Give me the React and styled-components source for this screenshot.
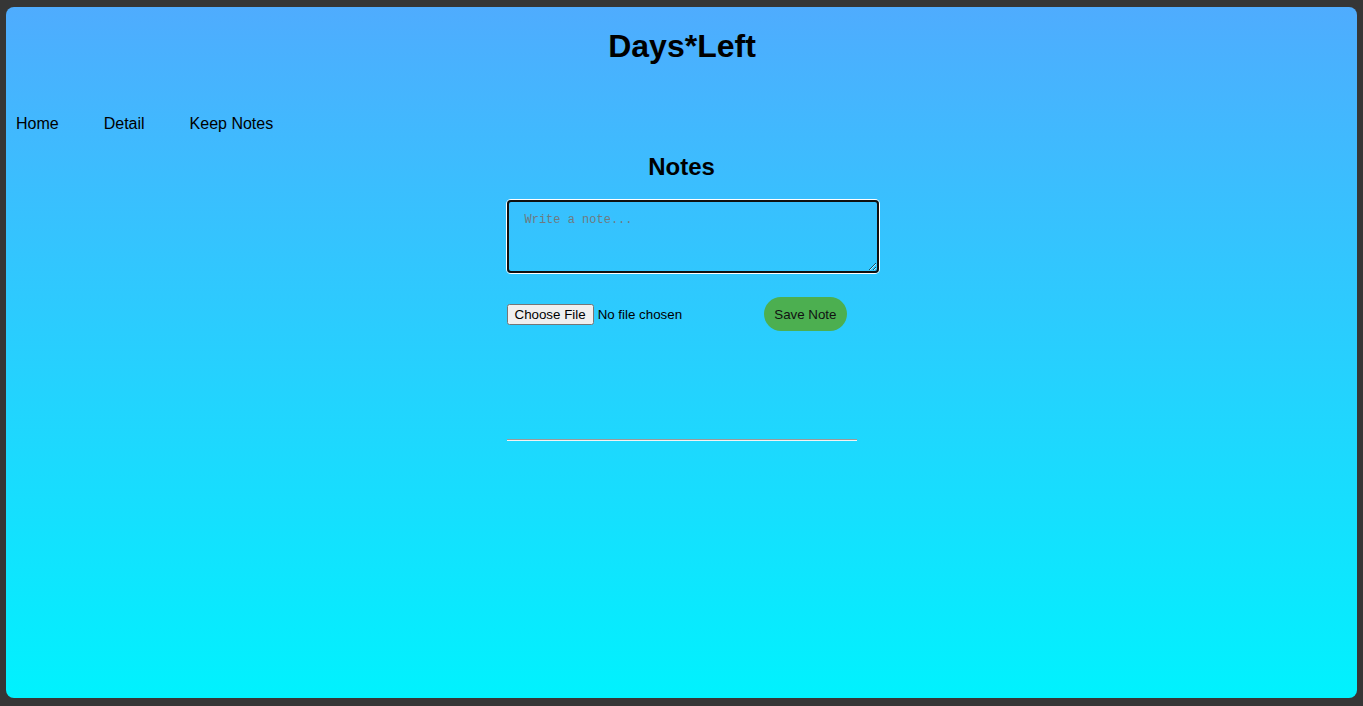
import React, { useState } from 'react';
import styled, { createGlobalStyle } from 'styled-components';

const GlobalStyle = createGlobalStyle`
  html, body {
    margin: 0;
    padding: 0;
    background: #363636;
  }
  body {
    font-family: Arial, "Liberation Sans", sans-serif;
  }
`;

const Frame = styled.div`
  padding: 7px 6px 8px;
  box-sizing: border-box;
  min-height: 100vh;
  display: flex;
`;

const Screen = styled.div`
  flex: 1;
  border-radius: 8px;
  background: linear-gradient(to bottom, #4facfe 0%, #00f2fe 100%);
  display: flex;
  flex-direction: column;
`;

const Title = styled.h1`
  margin: 21px 0 0;
  padding-left: 1px;
  font-size: 32px;
  line-height: 37px;
  font-weight: bold;
  text-align: center;
  color: #000;
`;

const Nav = styled.nav`
  display: flex;
  gap: 45px;
  margin: 50px 0 0;
  padding-left: 10px;
`;

const NavLink = styled.a`
  font-size: 16px;
  line-height: 18px;
  color: #000;
  text-decoration: none;
  cursor: pointer;
`;

const Notes = styled.section`
  width: 350px;
  margin: 0 auto;
  padding-top: 20px;
`;

const Heading = styled.h2`
  margin: 0;
  font-size: 24px;
  line-height: 28px;
  text-align: center;
  color: #000;
`;

const NoteInput = styled.textarea`
  display: block;
  box-sizing: border-box;
  width: 372px;
  height: 73px;
  margin-top: 19px;
  padding: 11px 16px;
  border: 2px solid #101010;
  border-radius: 4px;
  box-shadow: 0 0 0 1px #fff;
  background: transparent;
  font-family: "Liberation Mono", "DejaVu Sans Mono", monospace;
  font-size: 12px;
  outline: none;

  &::placeholder {
    color: #6f7a80;
  }
`;

const Actions = styled.div`
  display: flex;
  align-items: center;
  justify-content: space-between;
  margin-top: 24px;
  padding-right: 10px;
`;

const FileInput = styled.input`
  font-family: Arial, "Liberation Sans", sans-serif;
  font-size: 13.33px;
  color: #000;
`;

const SaveButton = styled.button`
  height: 34px;
  padding: 0 10px;
  border: none;
  border-radius: 17px;
  background: #4caf50;
  color: #111;
  font-family: Arial, "Liberation Sans", sans-serif;
  font-size: 13.33px;
  cursor: pointer;
`;

const Divider = styled.hr`
  margin: 108px 0 0;
  width: 350px;
  border: none;
  border-top: 1px solid #9a9a9a;
  border-bottom: 1px solid #f2f2f2;
`;

export default function App() {
  const [note, setNote] = useState('');

  return (
    <>
      <GlobalStyle />
      <Frame>
        <Screen>
          <Title>Days*Left</Title>
          <Nav>
            <NavLink>Home</NavLink>
            <NavLink>Detail</NavLink>
            <NavLink>Keep Notes</NavLink>
          </Nav>
          <Notes>
            <Heading>Notes</Heading>
            <NoteInput
              placeholder="Write a note..."
              value={note}
              onChange={(e) => setNote(e.target.value)}
            />
            <Actions>
              <FileInput type="file" />
              <SaveButton>Save Note</SaveButton>
            </Actions>
            <Divider />
          </Notes>
        </Screen>
      </Frame>
    </>
  );
}
